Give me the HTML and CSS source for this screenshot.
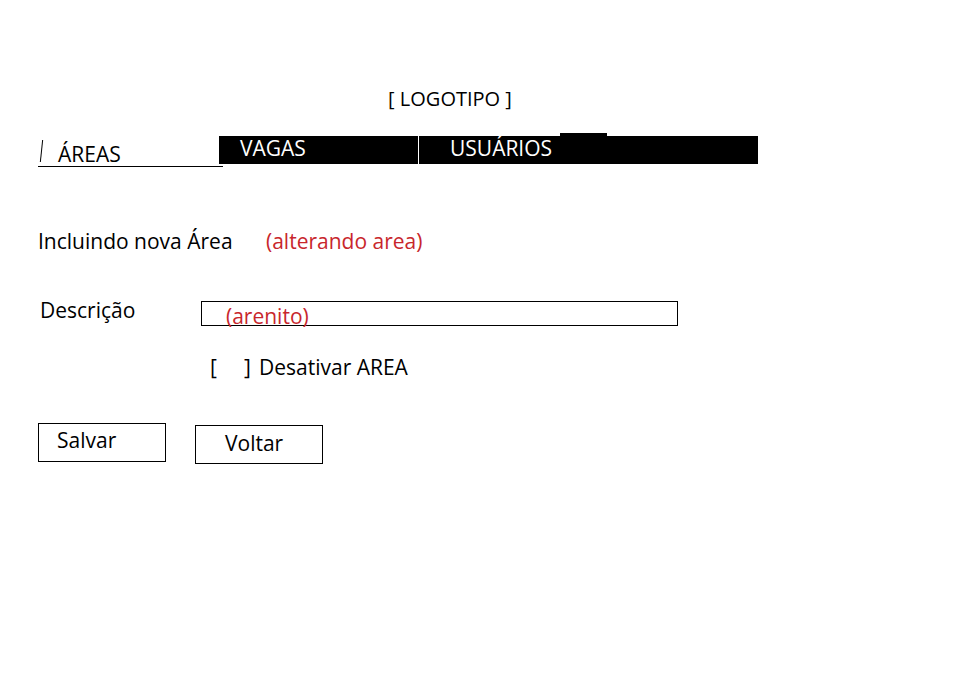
FILE: index.html
```html
<!DOCTYPE html>
<html lang="pt">
<head>
<meta charset="utf-8">
<title>Incluindo nova Área</title>
<link rel="stylesheet" href="styles.css">
</head>
<body>
<div class="page">
  <header class="logo">[ LOGOTIPO ]</header>
  <nav class="tabs">
    <div class="tab tab-active"><span class="tick"></span>ÁREAS</div>
    <div class="tabbar">
      <div class="tab tab-dark tab-vagas">VAGAS</div>
      <div class="tab tab-dark tab-usuarios">USUÁRIOS</div>
      <span class="bump"></span>
    </div>
  </nav>
  <div class="heading">
    <span class="title">Incluindo nova Área</span>
    <span class="note">(alterando area)</span>
  </div>
  <div class="field">
    <span class="label">Descrição</span>
    <div class="input"><span class="note">(arenito)</span></div>
  </div>
  <div class="check"><span class="box">[<span class="gap"></span>]</span>Desativar AREA</div>
  <div class="actions">
    <div class="btn btn-salvar">Salvar</div>
    <div class="btn btn-voltar">Voltar</div>
  </div>
</div>
</body>
</html>
```

FILE: styles.css
```css
html, body {
  margin: 0;
  padding: 0;
  background: #ffffff;
}
body {
  font-family: "Open Sans", "Noto Sans", sans-serif;
  font-size: 21px;
  color: #000;
  width: 958px;
  height: 674px;
  overflow: hidden;
}
.page {
  padding: 86px 0 0 38px;
  position: relative;
}
.logo {
  width: 824px;
  text-align: center;
  line-height: 26px;
  font-size: 20px;
}
.tabs {
  display: flex;
  margin-top: 24px;
  height: 32px;
}
.tab-active {
  position: relative;
  width: 185px;
  height: 31px;
  border-bottom: 1px solid #000;
  padding: 5px 0 0 20px;
  box-sizing: border-box;
  line-height: 26px;
}
.tick {
  position: absolute;
  left: 3px;
  top: 4px;
  width: 1px;
  height: 22px;
  background: #000;
  transform: skewX(-6deg);
}
.tabbar {
  position: relative;
  display: flex;
  background: #000;
  margin-left: -4px;
  width: 539px;
  height: 28px;
}
.tab-dark {
  color: #fff;
  line-height: 24px;
}
.tab-vagas {
  width: 200px;
  box-sizing: border-box;
  padding-left: 21px;
  border-right: 1px solid #fff;
}
.tab-usuarios {
  padding-left: 31px;
}
.bump {
  position: absolute;
  left: 341px;
  top: -3px;
  width: 47px;
  height: 3px;
  background: #000;
}
.heading {
  display: flex;
  align-items: baseline;
  margin-top: 60px;
  height: 26px;
  line-height: 26px;
}
.title {
  width: 228px;
}
.note {
  color: #c8262c;
}
.field {
  display: flex;
  margin-top: 43px;
  height: 28px;
}
.label {
  width: 161px;
  padding-left: 2px;
  line-height: 22px;
  margin-top: 2px;
}
.input {
  width: 477px;
  height: 25px;
  margin-top: 4px;
  border: 1px solid #000;
  padding-left: 24px;
  box-sizing: border-box;
  line-height: 29px;
}
.check {
  display: flex;
  margin: 29px 0 0 172px;
  line-height: 26px;
}
.box {
  display: flex;
  width: 49px;
}
.gap {
  width: 27px;
}
.actions {
  display: flex;
  align-items: flex-start;
  margin-top: 43px;
}
.btn {
  width: 128px;
  height: 39px;
  border: 1px solid #000;
  box-sizing: border-box;
  line-height: 32px;
}
.btn-salvar {
  padding-left: 18px;
}
.btn-voltar {
  margin: 2px 0 0 29px;
  padding-left: 29px;
  line-height: 35px;
}
```
